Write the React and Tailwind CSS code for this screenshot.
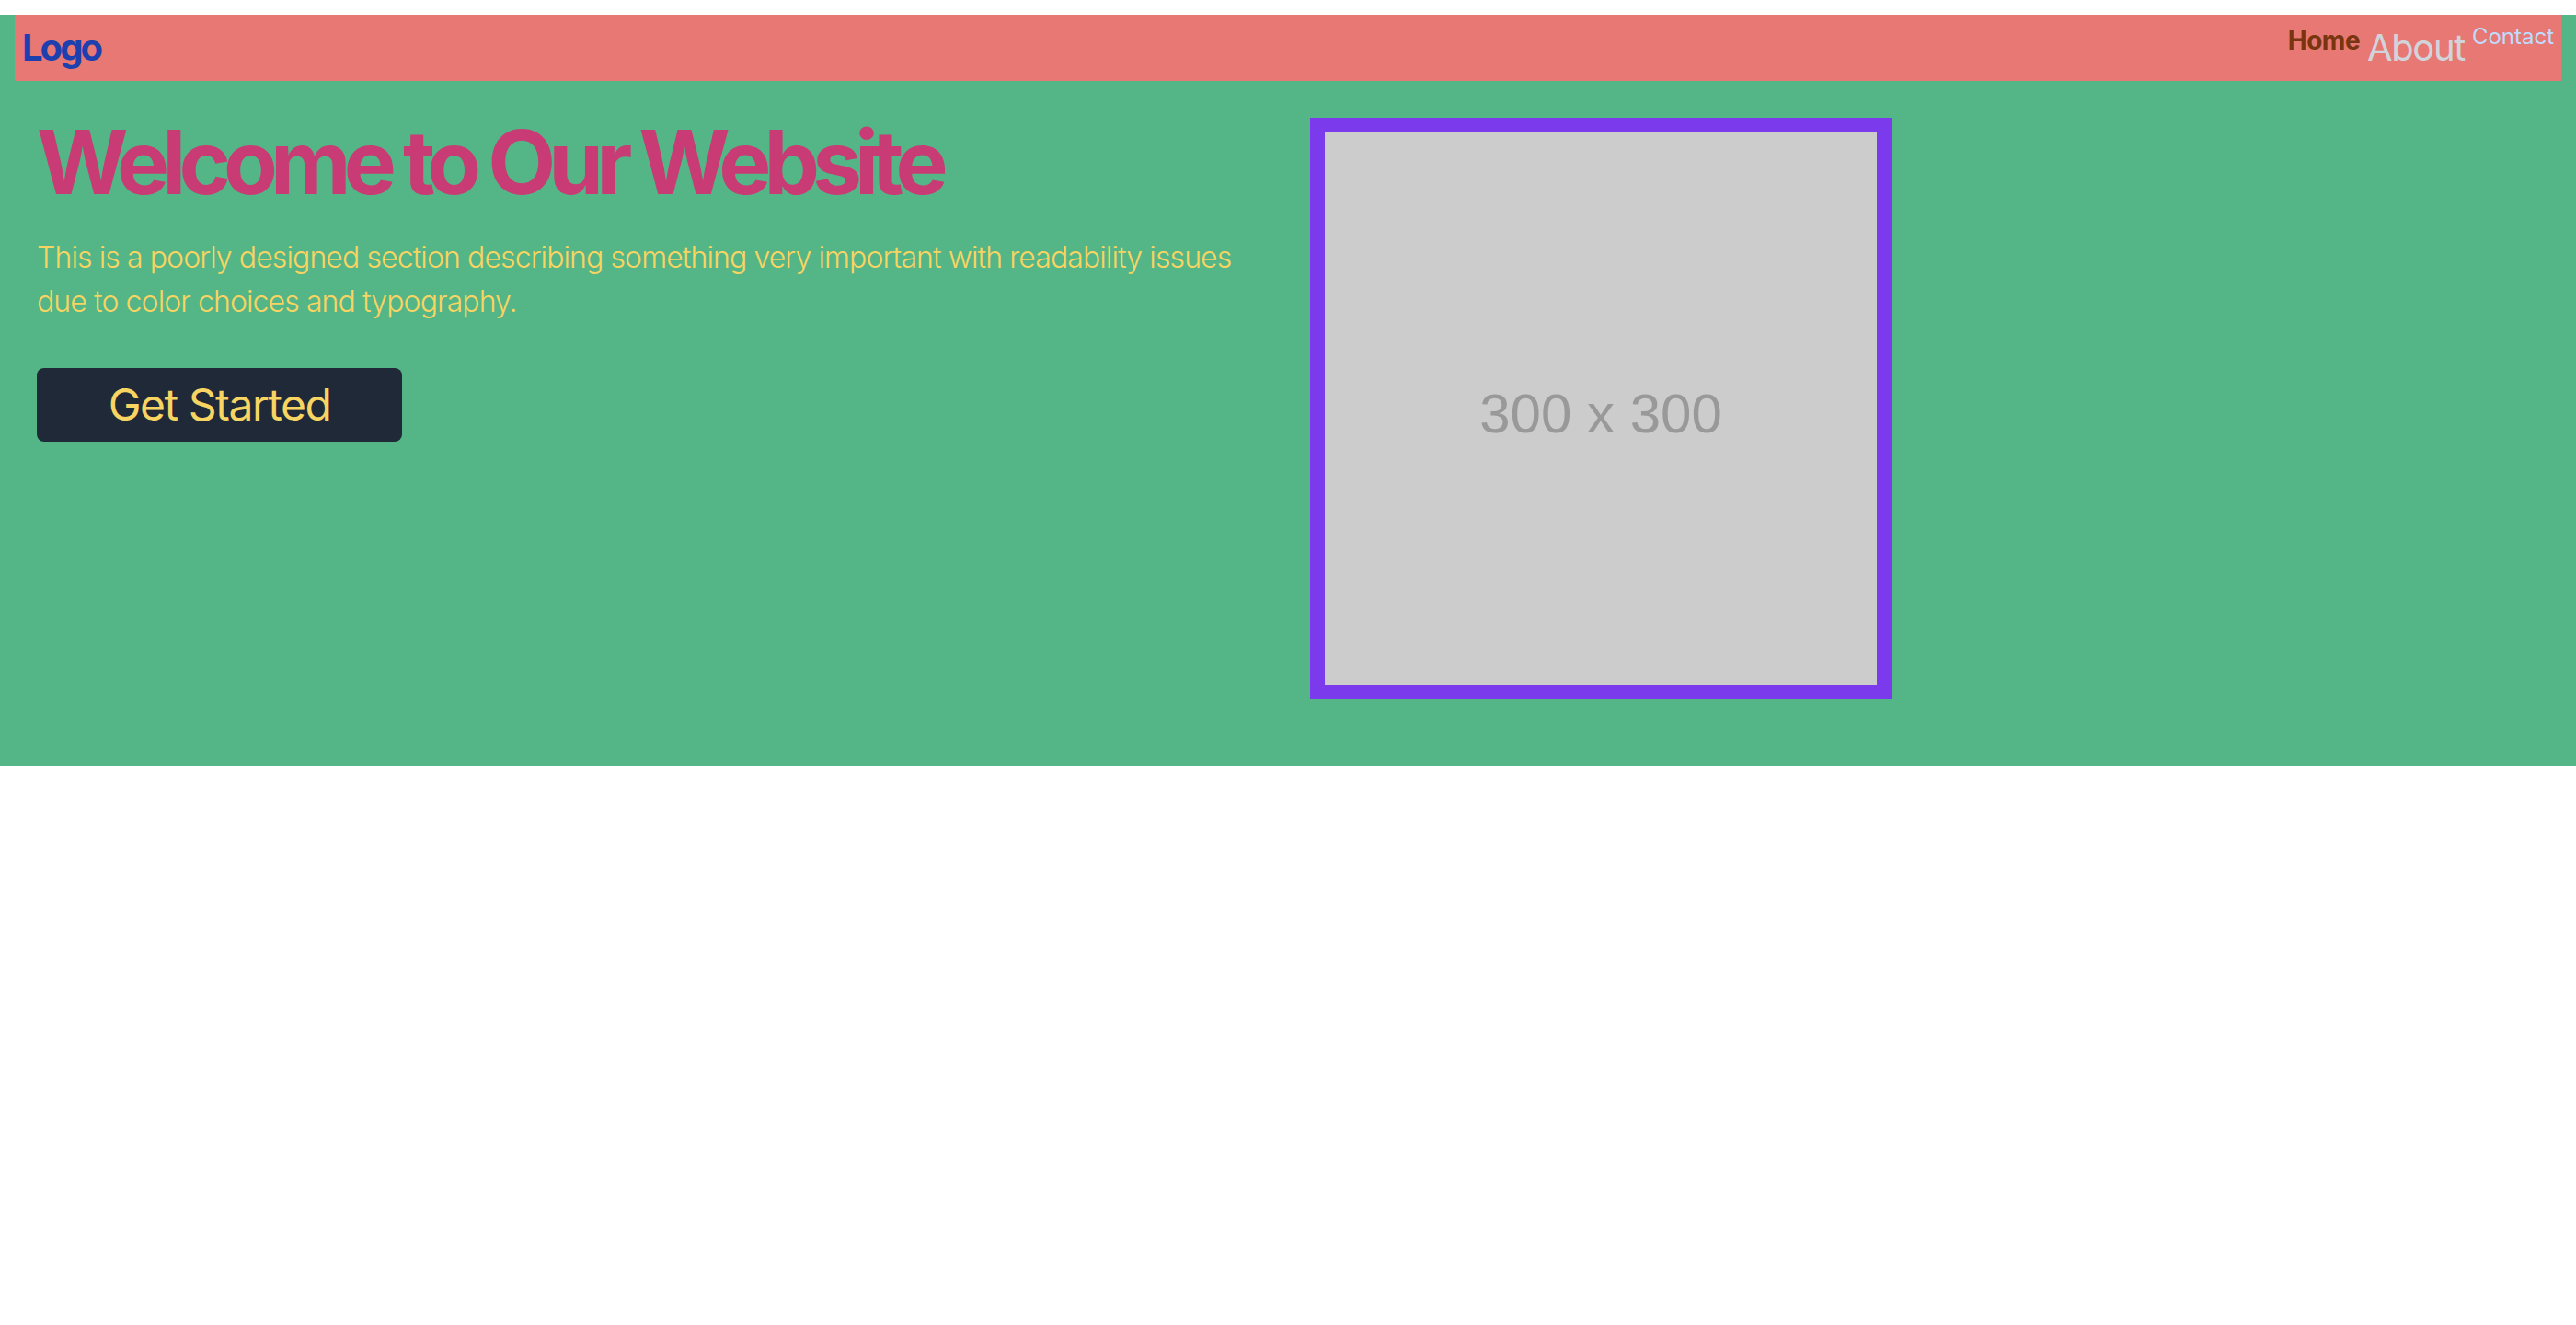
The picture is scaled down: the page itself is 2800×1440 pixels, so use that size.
import React from 'react';

// Landing hero — everything is drawn at 2x scale (nav, hero, placeholder image)
const NAV_LINKS = [
  { label: 'Home', className: 'text-[28px] leading-[40px] font-bold text-[#78350f] tracking-[-0.5px]' },
  { label: 'About', className: 'text-[40px] leading-[56px] font-normal text-[#d1d5db] tracking-[-1.4px]' },
  { label: 'Contact', className: 'text-[24px] leading-[32px] font-normal text-[#bfdbfe]' },
];

const Placeholder = () => (
  <div className="w-[632px] h-[632px] border-[16px] border-[#7c3aed] bg-[#cccccc] flex items-center justify-center">
    <span className="mt-[12px] text-[60px] text-[#999999] font-['Liberation_Sans',Arial,sans-serif]">300 x 300</span>
  </div>
);

export default function App() {
  return (
    <div className="bg-[#54b687] font-['Inter',sans-serif] pb-[72px]">
      {/* Header */}
      <nav className="m-[16px] bg-[#e87873] px-[8px] py-[8px] flex items-center justify-between">
        <a href="#" className="text-[40px] leading-[56px] font-bold tracking-[-3px] text-[#1e40af]">Logo</a>
        <div className="flex items-start gap-[8px]">
          {NAV_LINKS.map((l) => (
            <a key={l.label} href="#" className={l.className}>{l.label}</a>
          ))}
        </div>
      </nav>

      {/* Hero */}
      <section className="px-[40px] pt-[24px] grid grid-cols-2 gap-[48px]">
        <div>
          <h1 className="text-[96px] leading-none font-bold tracking-[-0.082em] text-[#c93b74]">
            Welcome to Our Website
          </h1>
          <p className="mt-[32px] text-[32px] leading-[48px] font-light tracking-[-0.9px] text-[#f8d462]">
            This is a poorly designed section describing something very important with readability issues due to color choices and typography.
          </p>
          <button className="mt-[48px] bg-[#1f2937] text-[#f8d462] text-[48px] leading-[64px] tracking-[-1.5px] w-[397px] py-[8px] rounded-[8px]">
            Get Started
          </button>
        </div>
        <div>
          <Placeholder />
        </div>
      </section>
    </div>
  );
}
